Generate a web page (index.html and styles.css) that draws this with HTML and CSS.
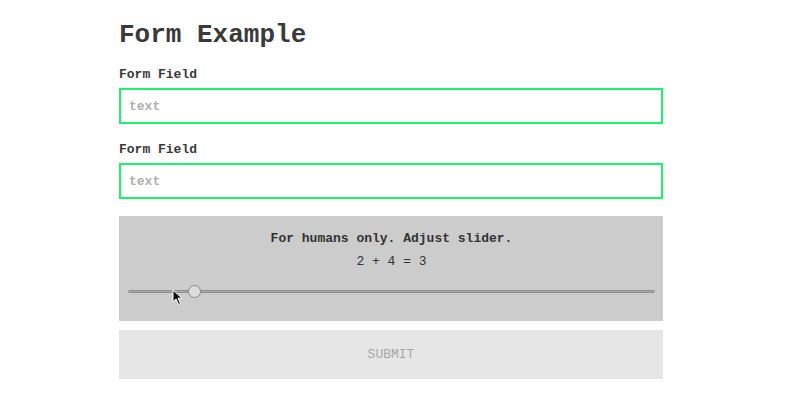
FILE: index.html
```html
<!DOCTYPE html>
<html>
<head>
<meta charset="utf-8">
<link rel="stylesheet" href="styles.css">
</head>
<body>
<div class="page">
  <h1 class="title">Form Example</h1>
  <label class="label">Form Field</label>
  <input class="field" type="text" placeholder="text">
  <label class="label label-2">Form Field</label>
  <input class="field" type="text" placeholder="text">
  <div class="captcha">
    <p class="captcha-title">For humans only. Adjust slider.</p>
    <p class="captcha-eq">2 + 4 = 3</p>
    <div class="slider-wrap">
      <input class="slider" type="range" min="0" max="100" step="0.1" value="11.6">
      <svg class="cursor" width="12" height="17" viewBox="0 0 12 17">
        <path d="M1 1 L1 13 L4 10 L6.5 15.5 L8.5 14.6 L6 9.2 L10 9.2 Z" fill="#111" stroke="#fff" stroke-width="1"/>
      </svg>
    </div>
  </div>
  <button class="submit" type="button">SUBMIT</button>
</div>
</body>
</html>
```

FILE: styles.css
```css
html, body {
  margin: 0;
  padding: 0;
  background: #ffffff;
}

body {
  font-family: "Liberation Mono", "Courier New", monospace;
  color: #333333;
}

.page {
  width: 544px;
  margin-left: 119px;
  padding-top: 20px;
  display: flex;
  flex-direction: column;
}

.title {
  margin: 0;
  font-size: 26px;
  line-height: 30px;
  font-weight: bold;
  color: #3a3a3a;
}

.label {
  display: block;
  margin-top: 17px;
  font-size: 13px;
  line-height: 16px;
  font-weight: bold;
  color: #3a3a3a;
}

.label-2 {
  margin-top: 18px;
}

.field {
  box-sizing: border-box;
  margin: 5px 0 0 0;
  width: 544px;
  height: 36px;
  border: 2px solid #19f56a;
  border-radius: 0;
  padding: 0 8px;
  font-family: "Liberation Mono", "Courier New", monospace;
  font-size: 13px;
  font-weight: bold;
  color: #333;
  background: #fff;
  outline: none;
}

.field::placeholder {
  color: #b0b0b0;
}

.captcha {
  box-sizing: border-box;
  margin-top: 17px;
  height: 105px;
  background: #cccccc;
  padding: 15px 8px 0 9px;
  display: flex;
  flex-direction: column;
  align-items: stretch;
}

.captcha-title {
  margin: 0;
  text-align: center;
  font-size: 13px;
  line-height: 16px;
  font-weight: bold;
  color: #333;
}

.captcha-eq {
  margin: 7px 0 0 0;
  text-align: center;
  font-size: 13px;
  line-height: 16px;
  color: #333;
}

.slider-wrap {
  position: relative;
  margin-top: 14px;
  height: 14px;
}

.slider {
  -webkit-appearance: none;
  appearance: none;
  display: block;
  margin: 0;
  width: 100%;
  height: 14px;
  background: transparent;
  outline: none;
}

.slider::-webkit-slider-runnable-track {
  height: 3px;
  background: #a8a8a8;
  border: 1px solid #8f8f8f;
  border-radius: 2px;
}

.slider::-webkit-slider-thumb {
  -webkit-appearance: none;
  appearance: none;
  width: 13px;
  height: 13px;
  margin-top: -6px;
  border-radius: 50%;
  background: #dcdcdc;
  border: 1px solid #8a8a8a;
  box-sizing: border-box;
}

.cursor {
  position: absolute;
  left: 44px;
  top: 5px;
}

.submit {
  margin-top: 9px;
  height: 49px;
  width: 544px;
  border: none;
  border-radius: 0;
  background: #e6e6e6;
  font-family: "Liberation Mono", "Courier New", monospace;
  font-size: 13px;
  color: #a8a8a8;
  padding: 0;
}
```
